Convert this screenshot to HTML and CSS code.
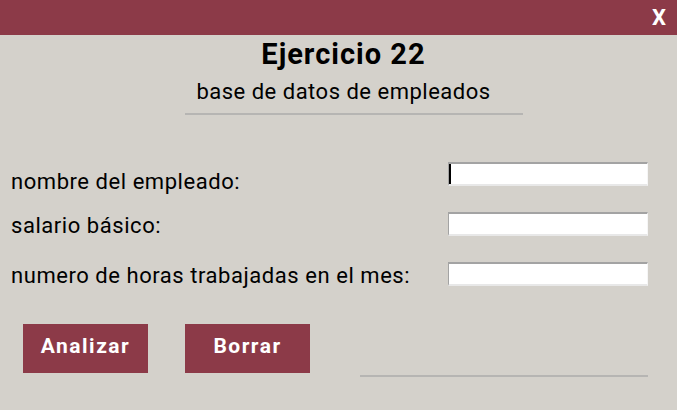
FILE: index.html
```html
<!DOCTYPE html>
<html lang="es">
<head>
<meta charset="utf-8">
<title>Ejercicio 22</title>
<link rel="stylesheet" href="styles.css">
</head>
<body>
<div class="titlebar"><span class="close">X</span></div>
<div class="heading">
  <h1 class="title">Ejercicio 22</h1>
  <p class="subtitle">base de datos de empleados</p>
</div>
<div class="rule-top"></div>
<form class="form">
  <div class="row row-first">
    <label class="label">nombre del empleado:</label>
    <input class="field focused" type="text">
  </div>
  <div class="row">
    <label class="label">salario básico:</label>
    <input class="field" type="text">
  </div>
  <div class="row">
    <label class="label">numero de horas trabajadas en el mes:</label>
    <input class="field" type="text">
  </div>
  <div class="actions">
    <button class="btn" type="button">Analizar</button>
    <button class="btn" type="button">Borrar</button>
    <div class="rule-bottom"></div>
  </div>
</form>
</body>
</html>
```
FILE: styles.css
```css
html, body {
  margin: 0;
  padding: 0;
}
body {
  width: 677px;
  height: 410px;
  background: #d4d1cb;
  font-family: Roboto, "Liberation Sans", sans-serif;
  color: #000;
  overflow: hidden;
}
.titlebar {
  height: 35px;
  background: #8c3a48;
  display: flex;
  justify-content: flex-end;
  align-items: center;
  padding-right: 11px;
}
.close {
  color: #fff;
  font-weight: 700;
  font-size: 22px;
  line-height: 22px;
  margin-top: 1px;
}
.heading {
  padding-left: 10px;
  padding-top: 3px;
  text-align: center;
}
.title {
  margin: 0;
  font-size: 29px;
  line-height: 32px;
  font-weight: 700;
  letter-spacing: 1px;
}
.subtitle {
  margin: 10px 0 0;
  font-size: 22px;
  line-height: 24px;
  letter-spacing: 0.5px;
}
.rule-top {
  margin: 9px 0 0 185px;
  width: 338px;
  height: 2px;
  background: #b6b5b3;
}
.form {
  margin: 47px 0 0;
}
.row {
  display: flex;
  align-items: flex-start;
  padding-left: 11px;
  padding-right: 29px;
  height: 24px;
  margin-bottom: 26px;
}
.label {
  font-size: 22px;
  line-height: 24px;
  letter-spacing: 0.55px;
  margin-top: 2px;
  white-space: nowrap;
}
.row-first .label {
  margin-top: 8px;
}
.field {
  margin-left: auto;
  width: 200px;
  height: 24px;
  box-sizing: border-box;
  background: #fff;
  border-style: solid;
  border-width: 2px 1px 2px 1px;
  border-color: #a3a3a3 #f6f6f6 #e8e8e8 #a3a3a3;
  padding: 0;
  outline: none;
}
.focused {
  box-shadow: inset 2px 0 0 #000;
}
.actions {
  display: flex;
  align-items: flex-start;
  padding-left: 23px;
  margin-top: 38px;
  gap: 37px;
}
.btn {
  width: 125px;
  height: 49px;
  background: #8c3a48;
  color: #fff;
  border: none;
  font-family: Roboto, "Liberation Sans", sans-serif;
  font-weight: 700;
  font-size: 21px;
  letter-spacing: 1.5px;
  padding: 0 0 6px;
}
.rule-bottom {
  margin-left: 13px;
  margin-top: 51px;
  width: 288px;
  height: 2px;
  background: #b6b5b3;
}
```
